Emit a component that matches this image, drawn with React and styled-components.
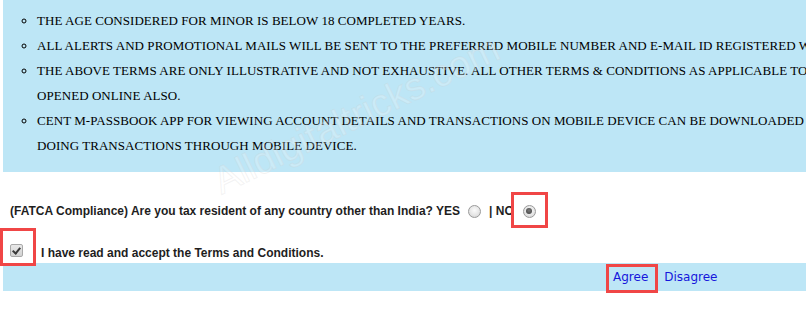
import React from "react";
import styled, { createGlobalStyle } from "styled-components";

const Global = createGlobalStyle`
  html, body {
    margin: 0;
    padding: 0;
    background: #ffffff;
    overflow: hidden;
  }
`;

const Page = styled.div`
  position: relative;
  width: 806px;
  height: 310px;
  overflow: hidden;
  font-family: "Liberation Sans", Arial, sans-serif;
`;

const Terms = styled.div`
  margin-left: 3px;
  width: 900px;
  background: #bde6f6;
  padding: 8px 0 14px;
`;

const List = styled.ul`
  margin: 0;
  padding-left: 34px;
  list-style: circle;
  font-family: "Liberation Serif", "Times New Roman", serif;
  font-size: 13px;
  letter-spacing: 0.05px;
  line-height: 25px;
  color: #000;
`;

const Item = styled.li`
  white-space: nowrap;
`;

const Question = styled.div`
  display: flex;
  align-items: center;
  padding: 29px 0 0 10px;
  height: 20px;
  font-size: 12px;
  font-weight: bold;
  color: #1e1e1e;
`;

const Radio = styled.span`
  display: inline-block;
  box-sizing: border-box;
  width: 13px;
  height: 13px;
  margin: ${p => p.$margin || "0"};
  border-radius: 50%;
  border: 1px solid #9a9a9a;
  background: radial-gradient(circle at 50% 40%, #fbfbfb 0%, #e6e6e6 55%, #cfcfcf 100%);
  position: relative;
  &::after {
    content: "";
    display: ${p => (p.$checked ? "block" : "none")};
    position: absolute;
    left: 2.5px;
    top: 2.5px;
    width: 6px;
    height: 6px;
    border-radius: 50%;
    background: radial-gradient(circle at 50% 40%, #7a7a7a 0%, #3c3c3c 100%);
  }
`;

const Highlight = styled.span`
  position: relative;
  display: inline-flex;
  margin-left: ${p => p.$gap || 0}px;
  &::after {
    content: "";
    position: absolute;
    top: ${p => p.$top}px;
    right: ${p => p.$right}px;
    bottom: ${p => p.$bottom}px;
    left: ${p => p.$left}px;
    border: 3px solid #f04646;
    pointer-events: none;
  }
`;

const Accept = styled.div`
  display: flex;
  align-items: center;
  padding: 20px 0 0 10px;
  height: 19px;
  font-size: 12px;
  font-weight: bold;
  color: #1e1e1e;
`;

const Checkbox = styled.span`
  display: inline-block;
  box-sizing: border-box;
  width: 13px;
  height: 13px;
  border: 1px solid #a9a9a9;
  border-radius: 2px;
  background: linear-gradient(#e8e8e8, #d2d2d2);
  position: relative;
  &::after {
    content: "";
    position: absolute;
    left: 3px;
    top: 1px;
    width: 3px;
    height: 6px;
    border: solid #3a3a3a;
    border-width: 0 2px 2px 0;
    transform: rotate(40deg);
  }
`;

const Label = styled.span`
  margin-left: 18px;
  margin-top: 4px;
`;

const ActionBar = styled.div`
  margin-left: 3px;
  margin-top: 3px;
  height: 28px;
  background: #bde6f6;
  display: flex;
  align-items: center;
  padding-left: 610px;
  gap: 16px;
`;

const Link = styled.a`
  font-family: "DejaVu Sans", Verdana, sans-serif;
  font-size: 12px;
  color: #1616dc;
  text-decoration: none;
`;

const Watermark = styled.div`
  position: absolute;
  left: 216px;
  top: 162px;
  transform: rotate(-26deg);
  transform-origin: left center;
  font-size: 38px;
  font-family: "Liberation Sans", Arial, sans-serif;
  color: rgba(255, 255, 255, 0.22);
  -webkit-text-stroke: 1px rgba(200, 200, 200, 0.22);
  white-space: nowrap;
  pointer-events: none;
`;

const terms = [
  ["THE AGE CONSIDERED FOR MINOR IS BELOW 18 COMPLETED YEARS."],
  [
    "ALL ALERTS AND PROMOTIONAL MAILS WILL BE SENT TO THE PREFERRED MOBILE NUMBER AND E-MAIL ID REGISTERED WITH THE BANK.",
  ],
  [
    "THE ABOVE TERMS ARE ONLY ILLUSTRATIVE AND NOT EXHAUSTIVE. ALL OTHER TERMS & CONDITIONS AS APPLICABLE TO ACCOUNTS",
    "OPENED ONLINE ALSO.",
  ],
  [
    "CENT M-PASSBOOK APP FOR VIEWING ACCOUNT DETAILS AND TRANSACTIONS ON MOBILE DEVICE CAN BE DOWNLOADED FROM PLAY STORE FOR",
    "DOING TRANSACTIONS THROUGH MOBILE DEVICE.",
  ],
];

export default function App() {
  return (
    <Page>
      <Global />
      <Terms>
        <List>
          {terms.map((lines, i) => (
            <Item key={i}>
              {lines.map((l, j) => (
                <React.Fragment key={j}>
                  {j > 0 && <br />}
                  {l}
                </React.Fragment>
              ))}
            </Item>
          ))}
        </List>
      </Terms>
      <Question>
        (FATCA Compliance) Are you tax resident of any country other than India? YES
        <Radio $margin="0 8px 0 8px" />
        | NO
        <Highlight $gap={9} $top={-13} $right={-12} $bottom={-10} $left={-12}>
          <Radio $checked />
        </Highlight>
      </Question>
      <Accept>
        <Highlight $top={-16} $right={-13} $bottom={-9} $left={-10}>
          <Checkbox />
        </Highlight>
        <Label>I have read and accept the Terms and Conditions.</Label>
      </Accept>
      <ActionBar>
        <Highlight $top={-6} $right={-10} $bottom={-9} $left={-7}>
          <Link href="#">Agree</Link>
        </Highlight>
        <Link href="#">Disagree</Link>
      </ActionBar>
      <Watermark>Alldigitaltricks.com</Watermark>
    </Page>
  );
}
